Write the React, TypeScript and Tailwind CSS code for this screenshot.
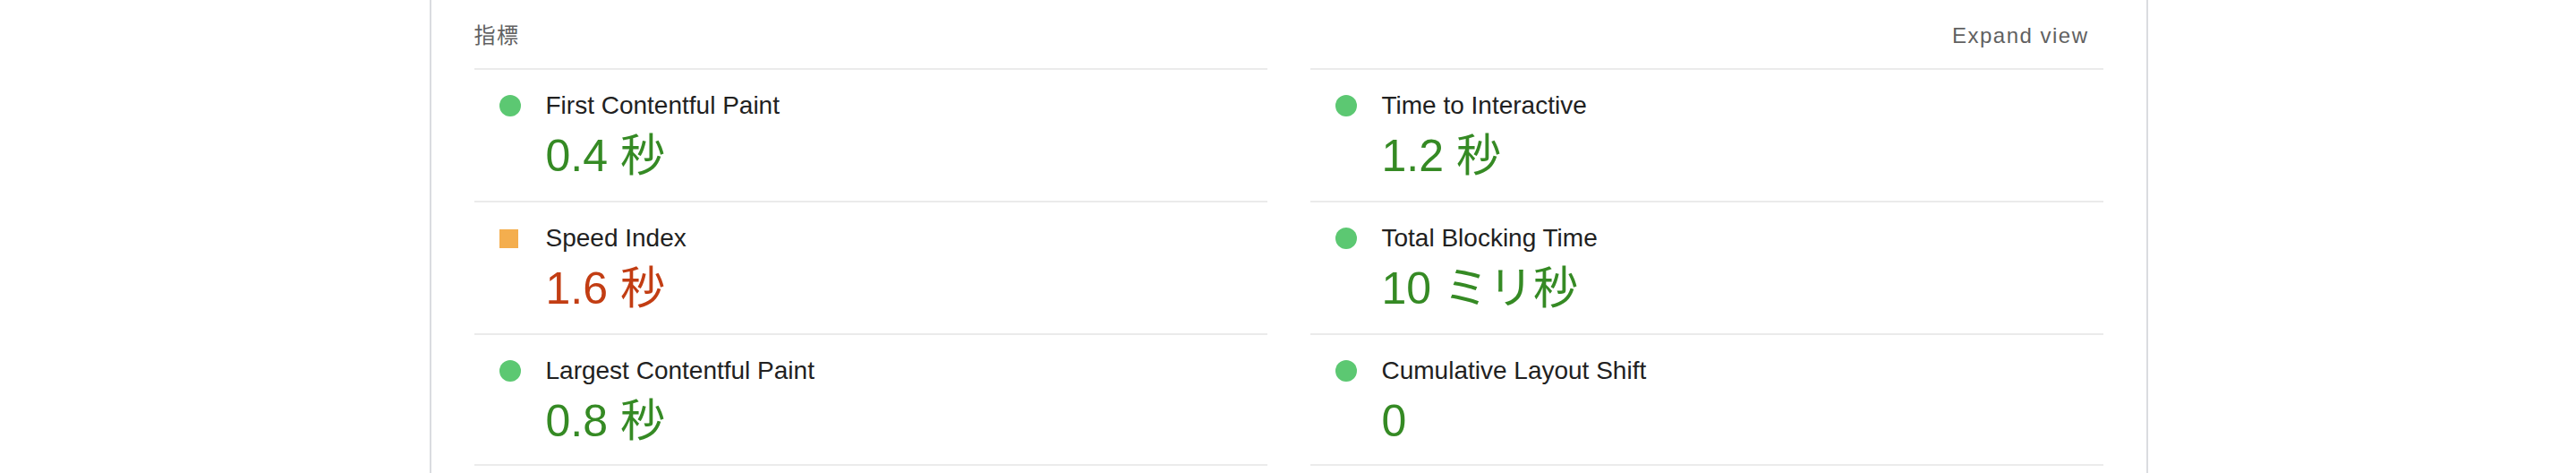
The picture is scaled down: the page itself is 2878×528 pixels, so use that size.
import React from "react";

type Metric = {
  title: string;
  value: string;
  status: "pass" | "average";
};

const metrics: Metric[] = [
  { title: "First Contentful Paint", value: "0.4 秒", status: "pass" },
  { title: "Time to Interactive", value: "1.2 秒", status: "pass" },
  { title: "Speed Index", value: "1.6 秒", status: "average" },
  { title: "Total Blocking Time", value: "10 ミリ秒", status: "pass" },
  { title: "Largest Contentful Paint", value: "0.8 秒", status: "pass" },
  { title: "Cumulative Layout Shift", value: "0", status: "pass" },
];

const font = {
  fontFamily:
    '"Liberation Sans", "Noto Sans CJK JP", Arial, Helvetica, sans-serif',
};

function MetricRow({ m, last }: { m: Metric; last: boolean }) {
  return (
    <div
      className={
        "flex border-t-2 border-[#ebebeb] pt-[20px] pb-[20px] h-[148px] " +
        (last ? "border-b-2" : "")
      }
    >
      <div className="w-[80px] shrink-0 pl-[28px] h-[40px] flex items-center">
        {m.status === "pass" ? (
          <div className="w-[24px] h-[24px] rounded-full bg-[#5cc872]" />
        ) : (
          <div className="w-[21px] h-[21px] bg-[#f4ae4e]" />
        )}
      </div>
      <div className="flex flex-col">
        <div className="text-[28px] leading-[40px] text-[#212121] whitespace-nowrap">
          {m.title}
        </div>
        <div
          className={
            "mt-[6px] text-[50px] leading-[60px] h-[60px] whitespace-nowrap " +
            (m.status === "pass" ? "text-[#358a24]" : "text-[#c23d13]")
          }
        >
          {m.value}
        </div>
      </div>
    </div>
  );
}

export default function App() {
  return (
    <div className="w-full h-[528px] overflow-hidden bg-white pl-px" style={font}>
      <div className="mx-auto w-[1920px] h-full border-x-2 border-[#dadce0] px-[48px]">
        <div className="h-[76px] pt-[3px] flex items-center justify-between text-[24px] tracking-[1.5px] text-[#616161] pr-[16px]">
          <span>指標</span>
          <span>Expand view</span>
        </div>
        <div className="grid grid-cols-2 gap-x-[48px]">
          {metrics.map((m, i) => (
            <MetricRow key={m.title} m={m} last={i >= metrics.length - 2} />
          ))}
        </div>
      </div>
    </div>
  );
}
